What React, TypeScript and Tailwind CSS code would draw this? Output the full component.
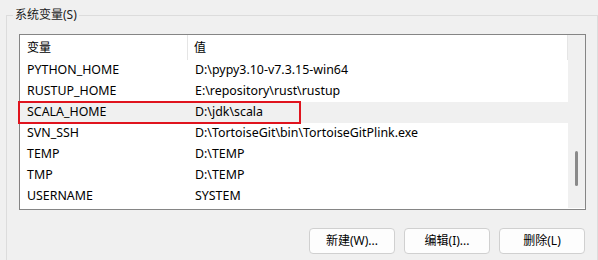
const rows = [
  { name: "PYTHON_HOME", value: "D:\\pypy3.10-v7.3.15-win64" },
  { name: "RUSTUP_HOME", value: "E:\\repository\\rust\\rustup" },
  { name: "SCALA_HOME", value: "D:\\jdk\\scala", selected: true },
  { name: "SVN_SSH", value: "D:\\TortoiseGit\\bin\\TortoiseGitPlink.exe" },
  { name: "TEMP", value: "D:\\TEMP" },
  { name: "TMP", value: "D:\\TEMP" },
  { name: "USERNAME", value: "SYSTEM" },
];

function Btn({ label }: { label: string }) {
  return (
    <button
      type="button"
      className="w-[86px] h-[26px] rounded-[4px] border border-[#d0d0d0] bg-[#fdfdfd] text-[12px] text-black flex items-center justify-center"
    >
      {label}
    </button>
  );
}

export default function App() {
  return (
    <div
      className="w-[598px] h-[260px] bg-[#f0f0f0] overflow-hidden text-[12px] text-black"
      style={{ fontFamily: '"Segoe UI", "Noto Sans", "Noto Sans CJK SC", sans-serif' }}
    >
      <fieldset className="ml-[6px] mt-[7px] w-[592px] h-[270px] border border-[#dcdcdc] p-0">
        <legend className="ml-[6px] px-[2px] leading-[16px] text-[#1b1b1b]">系统变量(S)</legend>

        <div className="relative ml-[12px] mt-[11px] w-[567px] h-[176px] border border-[#858585] bg-white flex">
          <div className="flex-1 flex flex-col">
            {/* header */}
            <div className="flex h-[25px] shrink-0">
              <div className="w-[168px] pl-[7px] flex items-center border-r border-[#e5e5e5]">变量</div>
              <div className="flex-1 pl-[6px] flex items-center border-r border-[#e5e5e5]">值</div>
            </div>
            {rows.map((r) => (
              <div
                key={r.name}
                className={`flex h-[21px] shrink-0 items-center text-[12.4px] ${r.selected ? "bg-[#f0f0f0]" : ""}`}
              >
                <div className="w-[169px] pl-[7px] whitespace-nowrap">{r.name}</div>
                <div className="flex-1 pl-[6px] whitespace-nowrap">{r.value}</div>
              </div>
            ))}
          </div>

          {/* scrollbar */}
          <div className="relative w-[17px] h-[173px] bg-[#f0f0f0]">
            <div className="absolute left-[7px] top-[116px] w-[3px] h-[35px] rounded-full bg-[#8a8a8a]" />
          </div>

          {/* red highlight */}
          <div className="absolute left-[-2px] top-[66px] w-[283px] h-[23px] border-2 border-[#e0141e]" />
        </div>

        <div className="mt-[18px] w-[578px] flex justify-end gap-[9px]">
          <Btn label="新建(W)..." />
          <Btn label="编辑(I)..." />
          <Btn label="删除(L)" />
        </div>
      </fieldset>
    </div>
  );
}
